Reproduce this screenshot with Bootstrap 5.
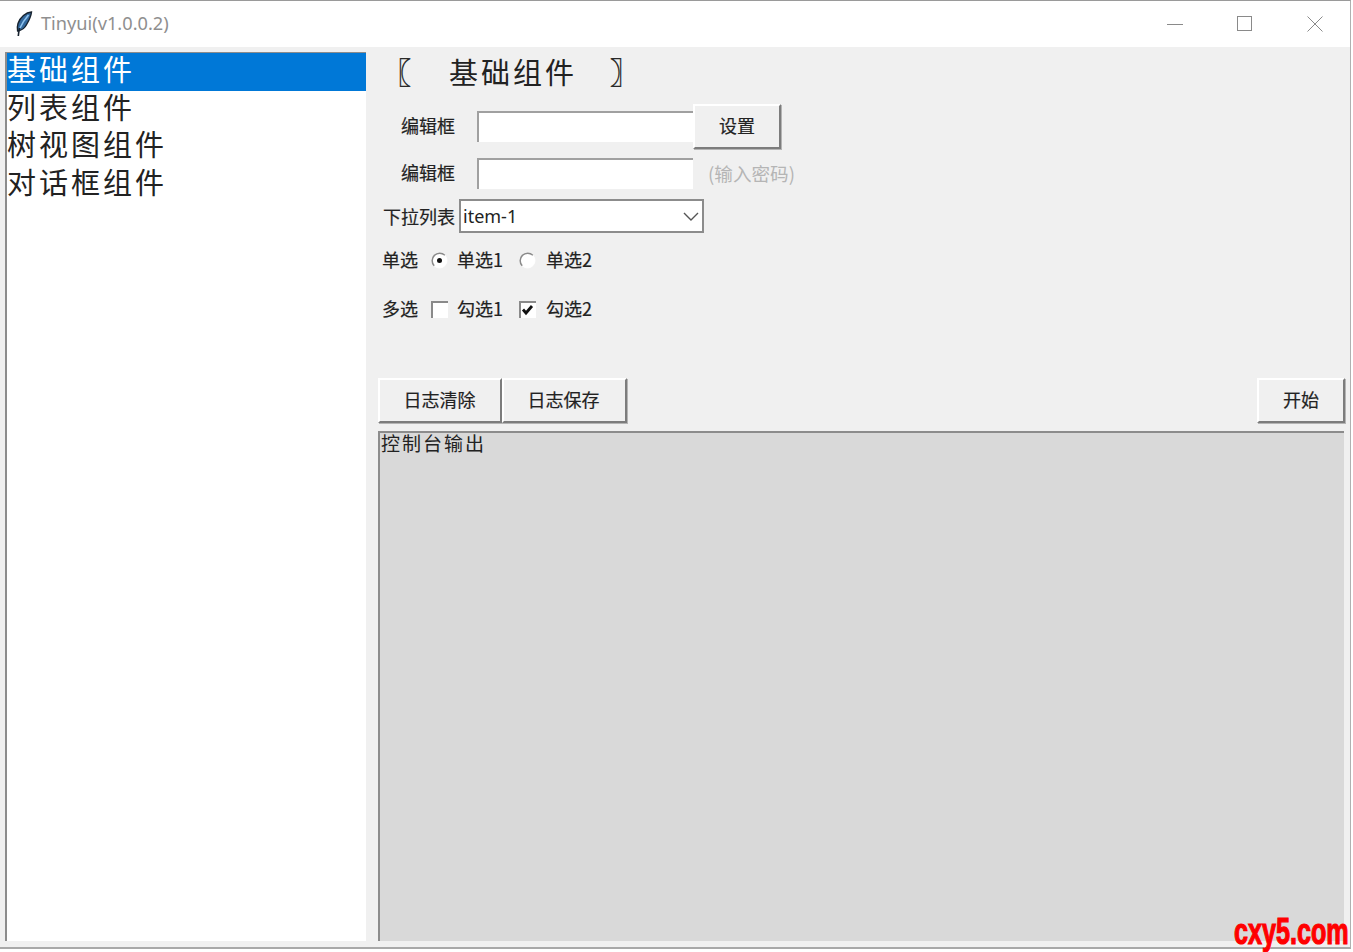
<!DOCTYPE html>
<html lang="zh-CN">
<head>
<meta charset="utf-8">
<title>Tinyui(v1.0.0.2)</title>
<link href="https://cdn.jsdelivr.net/npm/bootstrap@5.3.0/dist/css/bootstrap.min.css" rel="stylesheet">
<style>
html,body{height:952px;overflow:hidden;background:#fff}
body{font-family:"Noto Sans CJK SC","Noto Sans",sans-serif;color:#222}
.tk-window{width:1351px;height:949px;background:#f0f0f0;border-top:1px solid #9a9a9a;border-bottom:2px solid #a8a8a8;border-right:1px solid #b0b0b0}
.tk-title{height:46px;background:#fff}
.tk-name{font-family:"Noto Sans",sans-serif;font-size:18.2px;line-height:24px;color:#8f8f8f;margin-left:7px;margin-top:-3px}
.tk-feather{margin-left:14px}
.tk-ctl{width:70px;height:46px}
.tk-main{padding:5px 5px 0 5px;gap:12px}
.tk-list{width:361px;height:889px;background:#fff;border-top:1px solid #8c8c8c;border-left:2px solid #8c8c8c;list-style:none}
.tk-list li{height:37.5px;line-height:31px;font-size:29px;letter-spacing:3px;padding-left:0;color:#222;white-space:nowrap}
.tk-list li.tk-sel{background:#0078d7;color:#fff}
.tk-panel{width:967px}
.tk-head{height:42px;font-size:29px;letter-spacing:3px;line-height:39px;margin-bottom:10px;color:#222}
.tk-open{width:71px;padding-left:4px;flex:none;-webkit-text-stroke:.4px #222}
.tk-close{margin-left:33px;-webkit-text-stroke:.4px #222}
.tk-label{font-size:18px;line-height:24px;white-space:nowrap;color:#222;-webkit-text-stroke:.2px #222;margin-top:-2px}
.tk-lab-edit{width:99px;padding-left:23px;margin-top:-3px}
.tk-entry{width:216px;height:31px;background:#fff;border:0;border-top:2px solid #a0a0a0;border-left:2px solid #a0a0a0;border-radius:0;padding:0 2px;outline:0}
.tk-btn{height:45px;font-size:18px;color:#222;background:#f0f0f0;border:2px solid;border-color:#fff #7c7c7c #7c7c7c #fff;border-radius:0;padding:0 0 4px;line-height:1;box-shadow:1px 1px 0 #b4b4b4;-webkit-text-stroke:.2px #222}
.tk-w88{width:88px}.tk-w124{width:124px;padding-right:1px}.tk-w125{width:125px;padding-right:2px}
.tk-row1{height:45px}
.tk-row2{height:31px;margin-top:9px}
.tk-hint{font-size:18.6px;line-height:24px;color:#b5b5b5;margin-left:15px;margin-top:-2px;white-space:nowrap}
.tk-row3{height:34px;margin-top:10px;padding-left:5px}
.tk-row3 .tk-label{margin-top:0}
.tk-select{width:245px;height:34px;margin-left:4px;padding:0 30px 0 2px;font-family:"Noto Sans","Noto Sans CJK SC",sans-serif;font-size:18px;color:#222;border:2px solid #8c8c8c;border-radius:0;background-image:url("data:image/svg+xml,%3csvg xmlns='http://www.w3.org/2000/svg' viewBox='0 0 18 14'%3e%3cpath fill='none' stroke='%23555' stroke-width='1.4' d='M2 4l7 7 7-7'/%3e%3c/svg%3e");background-position:right 2px center;background-size:18px 14px;line-height:1}
.tk-row4{height:30px;margin-top:12px;padding-left:4px}
.tk-row5{height:30px;margin-top:19px;padding-left:4px}
.tk-opt1{margin-left:13px;margin-right:9px;flex:none}
.tk-opt2{margin-left:16px;margin-right:10px;flex:none}
.tk-row6{height:45px;margin-top:54px;padding-left:0;padding-right:0}
.tk-console{height:510px;margin-top:8px;width:966px;background:#d9d9d9;border-top:2px solid #8c8c8c;border-left:2px solid #8c8c8c;font-size:19px;letter-spacing:2px;line-height:19px;padding:0 1px;color:#222}
.tk-mark{position:absolute;right:4px;top:910px;font-family:"Liberation Sans",sans-serif;font-weight:700;font-size:37px;line-height:44px;color:#f00;letter-spacing:0;-webkit-text-stroke:1.2px #f00;transform:scaleX(.68);transform-origin:right center}
</style>
</head>
<body class="m-0 position-relative">
<div class="tk-window d-flex flex-column">
  <div class="tk-title d-flex align-items-center flex-shrink-0">
    <svg class="tk-feather" width="20" height="26" viewBox="0 0 20 26" aria-hidden="true">
      <path d="M17.500 1C12 1.500 6 6 4 12.500c-.9 3-.8 5.500-.4 7.500 3.500-.5 7-2.500 9-6.500C15 9.500 17 5.500 17.500 1z" fill="#33689c" stroke="#17222e" stroke-width="1.400"/>
      <path d="M14.500 4C11 8 8 12.500 6 17" fill="none" stroke="#8fc3ee" stroke-width="1.600"/>
      <path d="M5.500 17c-.6 3-1 5.500-1.200 8" fill="none" stroke="#17222e" stroke-width="1.600"/>
    </svg>
    <span class="tk-name">Tinyui(v1.0.0.2)</span>
    <div class="ms-auto d-flex">
      <div class="tk-ctl d-flex align-items-center justify-content-center"><svg width="16" height="16" viewBox="0 0 16 16" aria-hidden="true"><path d="M0 8.500h16" stroke="#8a8a8a" fill="none"/></svg></div>
      <div class="tk-ctl d-flex align-items-center justify-content-center"><svg width="16" height="16" viewBox="0 0 16 16" aria-hidden="true"><rect x=".5" y=".5" width="14" height="14" stroke="#8a8a8a" fill="none"/></svg></div>
      <div class="tk-ctl d-flex align-items-center justify-content-center"><svg width="16" height="16" viewBox="0 0 16 16" aria-hidden="true"><path d="M.5.500l15 15M15.500.500l-15 15" stroke="#8a8a8a" fill="none"/></svg></div>
    </div>
  </div>
  <div class="tk-main d-flex">
    <ul class="tk-list m-0 p-0 flex-shrink-0">
      <li class="tk-sel">基础组件</li>
      <li>列表组件</li>
      <li>树视图组件</li>
      <li>对话框组件</li>
    </ul>
    <div class="tk-panel">
      <div class="tk-head d-flex"><span class="tk-open">〖</span><span>基础组件</span><span class="tk-close">〗</span></div>
      <div class="tk-row1 d-flex align-items-center">
        <span class="tk-label tk-lab-edit">编辑框</span>
        <input class="tk-entry" type="text" aria-label="编辑框">
        <button class="btn tk-btn tk-w88" type="button">设置</button>
      </div>
      <div class="tk-row2 d-flex align-items-center">
        <span class="tk-label tk-lab-edit">编辑框</span>
        <input class="tk-entry" type="password" aria-label="编辑框">
        <span class="tk-hint">(输入密码)</span>
      </div>
      <div class="tk-row3 d-flex align-items-center">
        <span class="tk-label">下拉列表</span>
        <select class="form-select tk-select" aria-label="下拉列表"><option>item-1</option></select>
      </div>
      <div class="tk-row4 d-flex align-items-center">
        <span class="tk-label">单选</span>
        <svg class="tk-opt1" width="17" height="17" viewBox="0 0 17 17" aria-hidden="true"><circle cx="8.500" cy="8.500" r="7.500" fill="#fff" stroke="#fff"/><path d="M3.200 13.800A7.500 7.500 0 0 1 13.800 3.200" fill="none" stroke="#8a8a8a" stroke-width="1.500"/><circle cx="8.500" cy="8.500" r="2.500" fill="#111"/></svg>
        <span class="tk-label">单选1</span>
        <svg class="tk-opt2" width="17" height="17" viewBox="0 0 17 17" aria-hidden="true"><circle cx="8.500" cy="8.500" r="7.500" fill="#fff" stroke="#fff"/><path d="M3.200 13.800A7.500 7.500 0 0 1 13.800 3.200" fill="none" stroke="#8a8a8a" stroke-width="1.500"/></svg>
        <span class="tk-label">单选2</span>
      </div>
      <div class="tk-row5 d-flex align-items-center">
        <span class="tk-label">多选</span>
        <svg class="tk-opt1" width="17" height="17" viewBox="0 0 17 17" aria-hidden="true"><rect x="0" y="0" width="17" height="17" fill="#fff"/><path d="M1 17V1h16" fill="none" stroke="#8a8a8a" stroke-width="2"/></svg>
        <span class="tk-label">勾选1</span>
        <svg class="tk-opt2" width="17" height="17" viewBox="0 0 17 17" aria-hidden="true"><rect x="0" y="0" width="17" height="17" fill="#fff"/><path d="M1 17V1h16" fill="none" stroke="#8a8a8a" stroke-width="2"/><path d="M4 8.500l3 3.500 6-7" fill="none" stroke="#111" stroke-width="2.800"/></svg>
        <span class="tk-label">勾选2</span>
      </div>
      <div class="tk-row6 d-flex">
        <button class="btn tk-btn tk-w124" type="button">日志清除</button>
        <button class="btn tk-btn tk-w125" type="button">日志保存</button>
        <button class="btn tk-btn tk-w88 ms-auto" type="button">开始</button>
      </div>
      <div class="tk-console">控制台输出</div>
    </div>
  </div>
</div>
<div class="tk-mark">cxy5.com</div>
<script src="https://cdn.jsdelivr.net/npm/bootstrap@5.3.0/dist/js/bootstrap.bundle.min.js"></script>
</body>
</html>
